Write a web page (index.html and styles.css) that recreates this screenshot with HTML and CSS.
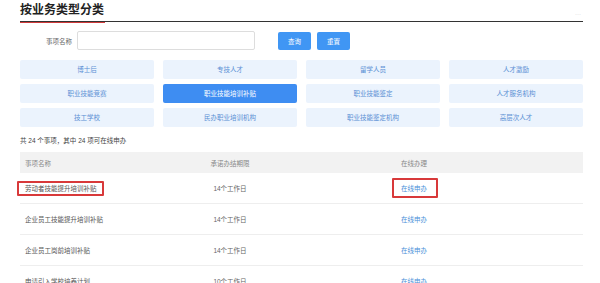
FILE: index.html
```html
<!DOCTYPE html>
<html lang="zh-CN">
<head>
    <meta charset="UTF-8">
    <title>按业务类型分类</title>
    <link rel="stylesheet" href="styles.css">
</head>
<body>

<section class="sort">
    <div class="sort_head">
        <h2 class="sort_title">按业务类型分类</h2>
        <span class="sort_more">···</span>
    </div>

    <div class="sort_search">
        <label class="sort_label" for="itemName">事项名称</label>
        <input class="sort_input" id="itemName" type="text">
        <button class="sort_btn sort_btn-query">查询</button>
        <button class="sort_btn">重置</button>
    </div>

    <div class="sort_types">
        <a href="#">博士后</a>
        <a href="#">专技人才</a>
        <a href="#">留学人员</a>
        <a href="#">人才激励</a>
        <a href="#">职业技能竞赛</a>
        <a href="#" class="sort_type-active">职业技能培训补贴</a>
        <a href="#">职业技能鉴定</a>
        <a href="#">人才服务机构</a>
        <a href="#">技工学校</a>
        <a href="#">民办职业培训机构</a>
        <a href="#">职业技能鉴定机构</a>
        <a href="#">高层次人才</a>
    </div>

    <p class="sort_count">共 24 个事项，其中 24 项可在线申办</p>

    <div class="sort_table">
        <div class="sort_row sort_row-head">
            <span>事项名称</span>
            <span class="sort_mid">承诺办结期限</span>
            <span class="sort_mid">在线办理</span>
        </div>
        <div class="sort_row">
            <span><em class="sort_mark sort_mark-name">劳动者技能提升培训补贴</em></span>
            <span class="sort_mid">14个工作日</span>
            <span class="sort_mid"><a href="#" class="sort_mark sort_mark-link">在线申办</a></span>
        </div>
        <div class="sort_row">
            <span>企业员工技能提升培训补贴</span>
            <span class="sort_mid">14个工作日</span>
            <span class="sort_mid"><a href="#">在线申办</a></span>
        </div>
        <div class="sort_row">
            <span>企业员工岗前培训补贴</span>
            <span class="sort_mid">14个工作日</span>
            <span class="sort_mid"><a href="#">在线申办</a></span>
        </div>
        <div class="sort_row">
            <span>申请引入学校培养计划</span>
            <span class="sort_mid">10个工作日</span>
            <span class="sort_mid"><a href="#">在线申办</a></span>
        </div>
    </div>
</section>

</body>
</html>
```

FILE: styles.css
```css
body {
    margin: 0;
    background: #fff;
    font-family: "Liberation Sans", "Noto Sans CJK SC", sans-serif;
    color: #333;
}

.sort {
    width: 563px;
    padding: 0 17px 0 20px;
}

/* title with red underline */
.sort_head {
    position: relative;
    height: 21px;
    border-bottom: 1px solid #333;
}

.sort .sort_title {
    display: inline-block;
    margin: 0;
    padding: 2px 1px 0 0;
    height: 19px;
    font-size: 12px;
    line-height: 14px;
    font-weight: bold;
    color: #222;
    border-bottom: 1px solid #d03a3a;
}

.sort .sort_more {
    position: absolute;
    right: 2px;
    top: 11px;
    font-size: 6px;
    color: #ccc;
}

/* search row */
.sort_search {
    display: flex;
    align-items: center;
    margin-top: 9px;
    height: 19px;
}

.sort_label {
    width: 52px;
    padding-right: 5px;
    text-align: right;
    font-size: 6.5px;
    color: #666;
}

.sort_input {
    box-sizing: border-box;
    width: 178px;
    height: 19px;
    margin: 0;
    border: 1px solid #ddd;
    border-radius: 2px;
    outline: none;
}

.sort_btn {
    width: 33px;
    height: 18px;
    margin: 0 0 0 6px;
    padding: 0;
    border: 0;
    border-radius: 2px;
    background-color: #4096f4;
    color: #fff;
    font-family: inherit;
    font-size: 6.5px;
}

.sort_btn-query {
    margin-left: 23px;
}

/* type buttons */
.sort_types {
    display: grid;
    grid-template-columns: repeat(4, 1fr);
    column-gap: 9px;
    row-gap: 5px;
    margin-top: 10px;
}

.sort_types a {
    height: 19px;
    line-height: 19px;
    text-align: center;
    border-radius: 2px;
    background-color: #ebf3fd;
    color: #5a8fd4;
    font-size: 6.5px;
    text-decoration: none;
}

.sort_types .sort_type-active {
    background-color: #3e8df2;
    color: #fff;
}

.sort_count {
    margin: 9px 0 0;
    height: 10px;
    line-height: 10px;
    font-size: 6.5px;
    color: #444;
}

/* table */
.sort_table {
    margin-top: 6px;
}

.sort_row {
    display: grid;
    grid-template-columns: 134px 152px 216px 1fr;
    align-items: center;
    height: 30px;
    border-bottom: 1px solid #eee;
    font-size: 6.5px;
    color: #555;
}

.sort_row span {
    padding-left: 5px;
}

.sort_row .sort_mid {
    padding-left: 0;
    text-align: center;
    color: #666;
}

.sort_row-head {
    height: 21px;
    border-bottom: 0;
    background-color: #f2f2f2;
    color: #888;
}

.sort_row-head .sort_mid {
    color: #888;
}

.sort_row a {
    color: #4a8fd9;
    text-decoration: none;
}

.sort_mark {
    position: relative;
    font-style: normal;
}

.sort_mark::before {
    content: '';
    position: absolute;
    border: 2px solid #d8393a;
    border-radius: 1px;
}

.sort_mark-name::before {
    top: -4px;
    bottom: -4px;
    left: -8px;
    right: -7px;
}

.sort_mark-link::before {
    top: -7px;
    bottom: -6px;
    left: -9px;
    right: -11px;
}
```
